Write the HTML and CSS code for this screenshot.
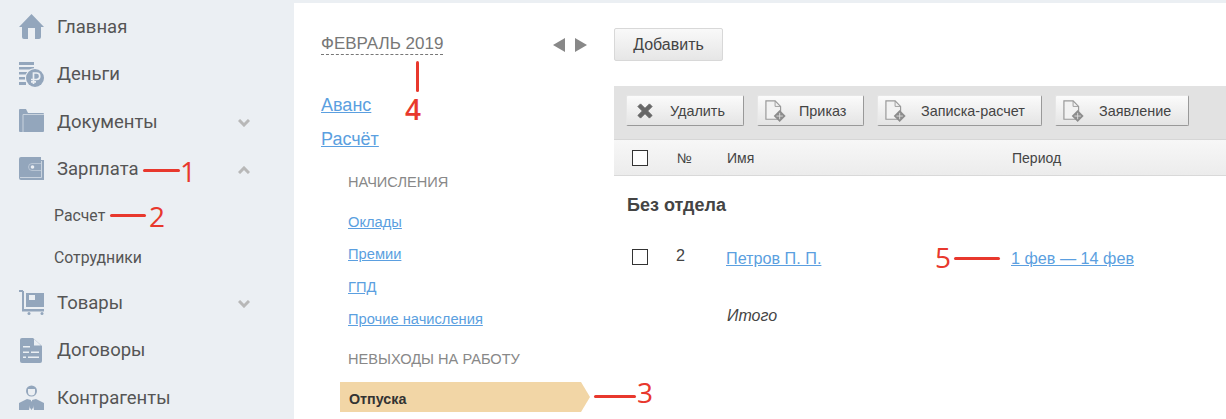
FILE: index.html
```html
<!DOCTYPE html>
<html lang="ru">
<head>
    <meta charset="UTF-8">
    <title>Зарплата</title>
    <link rel="stylesheet" href="styles.css">
</head>
<body>
    <div class="app">
        <nav class="sidebar">
            <a class="nav-item">
                <svg class="nav-icon" viewBox="0 0 25 25"><path d="M12.5 0 25 13h-3v10q0 2-2 2h-4V14H9v11H5q-2 0-2-2V13H0z"/></svg>
                <span class="nav-label">Главная</span>
            </a>
            <a class="nav-item">
                <svg class="nav-icon" viewBox="0 0 25 25"><path d="M0 0h15v3H0zM0 5h15v2.500H0zM0 10h8v2.500H0zM0 15h6v2.500H0zM0 20h7v3H0z"/><circle cx="16" cy="16" r="10" class="cut-fill"/><circle cx="16" cy="16" r="9"/><path class="cut" d="M14.500 22V11h3a3 3 0 0 1 0 6.500h-5.500M12 19.800h5" fill="none" stroke-width="1.700"/></svg>
                <span class="nav-label">Деньги</span>
            </a>
            <a class="nav-item">
                <svg class="nav-icon" viewBox="0 0 25 25"><path d="M1 0h6l2 4h15a1 1 0 0 1 1 1v17a1 1 0 0 1-1 1H1a1 1 0 0 1-1-1V1a1 1 0 0 1 1-1z"/><path class="cut soft" d="M4 23V5.500h21" fill="none" stroke-width="1"/></svg>
                <span class="nav-label">Документы</span>
                <svg class="chevron" viewBox="0 0 12 8"><path d="m1 1 5 5 5-5"/></svg>
            </a>
            <a class="nav-item">
                <svg class="nav-icon" viewBox="0 0 25 25"><path d="M2 0h20v3h3v20H2a2 2 0 0 1-2-2V2a2 2 0 0 1 2-2z"/><path class="cut soft" d="M22.500 4v16.500H1" fill="none" stroke-width="1"/><path class="cut soft" d="M22 6.500h-9a3 3 0 0 0 0 7h9" fill="none" stroke-width=".7"/><circle class="cut-fill" cx="13.500" cy="10" r="1.800"/></svg>
                <span class="nav-label">Зарплата</span>
                <svg class="chevron" viewBox="0 0 12 8"><path d="M1 7 6 2l5 5"/></svg>
            </a>
            <div class="subnav">
                <a class="subnav-item">Расчет</a>
                <a class="subnav-item">Сотрудники</a>
            </div>
            <a class="nav-item">
                <svg class="nav-icon" viewBox="0 0 25 25"><path d="M0 0h4v1h1v18h20v2.500H3V2H0z"/><path d="M7 3h18v14H7z"/><path class="cut-fill" d="M10 5h6v5h-6z"/><circle cx="10" cy="23.500" r="1.500"/><circle cx="23" cy="23.500" r="1.500"/></svg>
                <span class="nav-label">Товары</span>
                <svg class="chevron" viewBox="0 0 12 8"><path d="m1 1 5 5 5-5"/></svg>
            </a>
            <a class="nav-item">
                <svg class="nav-icon" viewBox="0 0 25 25"><path d="M3 0h11l9 8v15a2 2 0 0 1-2 2H3a2 2 0 0 1-2-2V2a2 2 0 0 1 2-2z"/><path class="cut-fill" d="M4 8h7v1.500H4zM4 13.500h6V15H4zM12 13.500h8V15h-8zM4 18.500h3V20H4zM9 18.500h11V20H9z"/><path class="cut-fill" d="m15 1 7 6.500h-7z"/></svg>
                <span class="nav-label">Договоры</span>
            </a>
            <a class="nav-item">
                <svg class="nav-icon" viewBox="0 0 25 25"><circle cx="12.500" cy="6" r="5.500"/><path class="cut-fill" d="M9 4h7v3a3.500 3.500 0 0 1-7 0z"/><path d="M8 14 0 18v7h10l2-10zM17 14l8 4v7H15l-2-10z"/><path d="m11 15 1.500 1.500L14 15l.5 7-2 3-2-3z"/></svg>
                <span class="nav-label">Контрагенты</span>
            </a>
        </nav>

        <main class="main">
            <section class="periods">
                <div class="month-head">
                    <span class="month-title">Февраль 2019</span>
                    <div class="month-arrows">
                        <span class="arrow arrow-left"></span>
                        <span class="arrow arrow-right"></span>
                    </div>
                </div>
                <a class="big-link first">Аванс</a>
                <a class="big-link">Расчёт</a>
                <div class="section-title">Начисления</div>
                <a class="small-link">Оклады</a>
                <a class="small-link">Премии</a>
                <a class="small-link">ГПД</a>
                <a class="small-link">Прочие начисления</a>
                <div class="section-title second">Невыходы на работу</div>
                <div class="active-item">Отпуска</div>
            </section>

            <section class="content">
                <button class="add-button">Добавить</button>
                <div class="toolbar">
                    <button class="tool-button delete">
                        <svg class="tool-icon" viewBox="0 0 18 18"><path d="M1 4 4 1l5 5 5-5 3 3-5 5 5 5-3 3-5-5-5 5-3-3 5-5z" fill="#666" stroke="#666" stroke-linejoin="round"/></svg>
                        Удалить
                    </button>
                    <button class="tool-button order">
                        <svg class="tool-icon doc" viewBox="0 0 24 24"><path d="M1 1h10l6 6v14H1z" fill="#f2f2f2" stroke="#999" stroke-width="1.300"/><path d="M11 1v6h6" fill="none" stroke="#999"/><path d="m16 11 6.500 6.500L16 24l-6.500-6.500z" fill="#8c8c8c"/><path d="M12.500 17.500h7M16 14v7" stroke="#ddd"/></svg>
                        Приказ
                    </button>
                    <button class="tool-button note">
                        <svg class="tool-icon doc" viewBox="0 0 24 24"><path d="M1 1h10l6 6v14H1z" fill="#f2f2f2" stroke="#999" stroke-width="1.300"/><path d="M11 1v6h6" fill="none" stroke="#999"/><path d="m16 11 6.500 6.500L16 24l-6.500-6.500z" fill="#8c8c8c"/><path d="M12.500 17.500h7M16 14v7" stroke="#ddd"/></svg>
                        Записка-расчет
                    </button>
                    <button class="tool-button claim">
                        <svg class="tool-icon doc" viewBox="0 0 24 24"><path d="M1 1h10l6 6v14H1z" fill="#f2f2f2" stroke="#999" stroke-width="1.300"/><path d="M11 1v6h6" fill="none" stroke="#999"/><path d="m16 11 6.500 6.500L16 24l-6.500-6.500z" fill="#8c8c8c"/><path d="M12.500 17.500h7M16 14v7" stroke="#ddd"/></svg>
                        Заявление
                    </button>
                </div>
                <div class="grid-row table-head">
                    <span class="check white"></span>
                    <span>№</span>
                    <span>Имя</span>
                    <span>Период</span>
                </div>
                <h2 class="dept">Без отдела</h2>
                <div class="grid-row table-row">
                    <span class="check"></span>
                    <span class="row-num">2</span>
                    <a class="row-link">Петров П. П.</a>
                    <a class="row-link">1 фев — 14 фев</a>
                </div>
                <div class="grid-row table-total">
                    <span></span>
                    <span></span>
                    <em>Итого</em>
                </div>
            </section>
        </main>

        <!-- красные пометки поверх скриншота -->
        <div class="mark line-1"></div><div class="digit digit-1">1</div>
        <div class="mark line-2"></div><div class="digit digit-2">2</div>
        <div class="mark line-3"></div><div class="digit digit-3">3</div>
        <div class="mark line-4"></div><div class="digit digit-4">4</div>
        <div class="mark line-5"></div><div class="digit digit-5">5</div>
    </div>
</body>
</html>
```

FILE: styles.css
```css
* {
    margin: 0;
    padding: 0;
    box-sizing: border-box;
}
html, body {
    height: 100%;
    overflow: hidden;
    background-color: #fff;
}
body {
    font-family: "Liberation Sans", Arial, sans-serif;
    color: #444;
}
a {
    display: block;
}
.app {
    display: flex;
    height: 419px;
    position: relative;
    overflow: hidden;
}

/* sidebar */
.sidebar {
    width: 294px;
    flex: none;
    padding-top: 2.9px;
    background-color: #ebeff3;
    font-family: Roboto, sans-serif;
    color: #555;
}
.nav-item {
    display: flex;
    align-items: center;
    height: 47.5px;
    padding-left: 19px;
    position: relative;
}
.nav-icon {
    width: 25px;
    height: 25px;
    flex: none;
    fill: #93a6bc;
    stroke-width: 0;
}
.nav-icon .cut {
    stroke: #ebeff3;
}
.nav-icon .cut.soft {
    stroke: #c9d3de;
}
.nav-icon .cut-fill {
    fill: #ebeff3;
}
.nav-label {
    margin-left: 13px;
    font-size: 18.5px;
}
.chevron {
    position: absolute;
    left: 238px;
    top: 21px;
    width: 12px;
    height: 8px;
    fill: none;
    stroke: #b8b8b8;
    stroke-width: 3;
}
.subnav {
    padding-top: 2.1px;
}
.subnav-item {
    height: 42px;
    line-height: 42px;
    padding-left: 54px;
    font-size: 15.8px;
}

/* period column */
.main {
    flex: 1;
    display: flex;
    border-top: 3px solid #ebeff3;
    min-width: 0;
}
.periods {
    width: 320px;
    flex: none;
    padding: 31px 0 0 27px;
    font-size: 14px;
}
.month-head {
    display: flex;
    justify-content: space-between;
    align-items: center;
    width: 266px;
    height: 21px;
}
.month-title {
    font-size: 17px;
    line-height: 20px;
    color: #777;
    text-transform: uppercase;
    border-bottom: 1px dashed #777;
}
.month-arrows {
    display: flex;
    gap: 10px;
}
.arrow {
    width: 0;
    height: 0;
    border-top: 7px solid transparent;
    border-bottom: 7px solid transparent;
}
.arrow-left {
    border-right: 12px solid #888;
}
.arrow-right {
    border-left: 12px solid #888;
}
.big-link {
    width: max-content;
    height: 34px;
    line-height: 35px;
    font-size: 18px;
    color: #5b9fe0;
    text-decoration: underline;
}
.big-link.first {
    margin-top: 33px;
}
.section-title {
    margin: 8px 0 8px 27px;
    height: 34px;
    line-height: 36px;
    font-size: 14.6px;
    color: #888;
    text-transform: uppercase;
}
.section-title.second {
    margin-top: 6px;
    margin-bottom: 7px;
}
.small-link {
    width: max-content;
    margin-left: 27px;
    height: 32.25px;
    line-height: 32px;
    font-size: 14.7px;
    color: #5b9fe0;
    text-decoration: underline;
}
.active-item {
    width: 250px;
    height: 30px;
    margin-left: 19px;
    padding-left: 9px;
    line-height: 34px;
    font-size: 14.3px;
    font-weight: bold;
    color: #333;
    background-color: #f2d6a6;
    clip-path: polygon(0 0, 241px 0, 100% 50%, 241px 100%, 0 100%);
}

/* right part */
.content {
    flex: 1;
    min-width: 0;
    padding-top: 25px;
}
.add-button {
    display: block;
    width: 109px;
    height: 33px;
    font-family: inherit;
    font-size: 16px;
    color: #444;
    border: 1px solid #d8d8d8;
    border-radius: 2px;
    background: linear-gradient(#f9f9f9, #e6e6e6);
}
.toolbar {
    display: flex;
    gap: 13px;
    height: 53px;
    margin-top: 25px;
    padding: 9px 12px;
    background-color: #e2e2e2;
}
.tool-button {
    display: flex;
    align-items: center;
    height: 31px;
    font-family: inherit;
    font-size: 14.4px;
    color: #444;
    border: 1px solid #e6e6e6;
    border-right-color: #999;
    border-bottom-color: #999;
    border-radius: 2px;
    background: linear-gradient(#fbfbfb, #e4e4e4);
}
.tool-icon {
    width: 16px;
    height: 16px;
    flex: none;
    margin-left: 10px;
}
.tool-icon.doc {
    width: 22px;
    height: 22px;
    margin-left: 7px;
}
.delete {
    width: 118px;
    gap: 17px;
}
.order {
    width: 107px;
    gap: 12px;
}
.note {
    width: 165px;
    gap: 14px;
}
.claim {
    width: 134px;
    gap: 14px;
}
.grid-row {
    display: grid;
    grid-template-columns: 45px 50px 285px 1fr;
    align-items: center;
    padding-left: 18px;
}
.table-head {
    height: 37px;
    font-size: 14px;
    color: #444;
    border-top: 1px solid #d6d6d6;
    border-bottom: 1px solid #d9d9d9;
    background: linear-gradient(#f7f7f7, #ececec);
}
.check {
    display: block;
    width: 16px;
    height: 16px;
    border: 1px solid #333;
}
.check.white {
    background-color: #fff;
}
.dept {
    margin-top: 18px;
    padding-left: 13px;
    height: 22px;
    line-height: 22px;
    font-size: 18px;
    color: #444;
}
.table-row {
    margin-top: 30px;
    height: 22px;
    font-size: 16.2px;
}
.row-num {
    margin-top: -4px;
    margin-left: -1px;
}
.row-link {
    width: max-content;
    margin-left: -1px;
    margin-top: 3px;
    color: #5b9fe0;
    text-decoration: underline;
}
.table-total {
    margin-top: 38px;
    height: 20px;
    font-size: 16px;
}

/* annotations */
.mark {
    position: absolute;
    background-color: #e8382d;
    height: 3px;
    border-radius: 2px;
}
.digit {
    position: absolute;
    font-family: "Open Sans", sans-serif;
    font-weight: 500;
    font-size: 28px;
    line-height: 28px;
    color: #e8382d;
}
.line-1 { left: 143px; top: 169px; width: 37px; }
.digit-1 { left: 180px; top: 157px; }
.line-2 { left: 110px; top: 214px; width: 36px; }
.digit-2 { left: 149px; top: 202px; }
.line-3 { left: 594px; top: 395px; width: 42px; }
.digit-3 { left: 637px; top: 378px; }
.line-4 { left: 416px; top: 61px; width: 3px; height: 31px; }
.digit-4 { left: 405px; top: 95px; font-weight: 600; }
.line-5 { left: 954px; top: 257px; width: 46px; }
.digit-5 { left: 935px; top: 243px; }
```
